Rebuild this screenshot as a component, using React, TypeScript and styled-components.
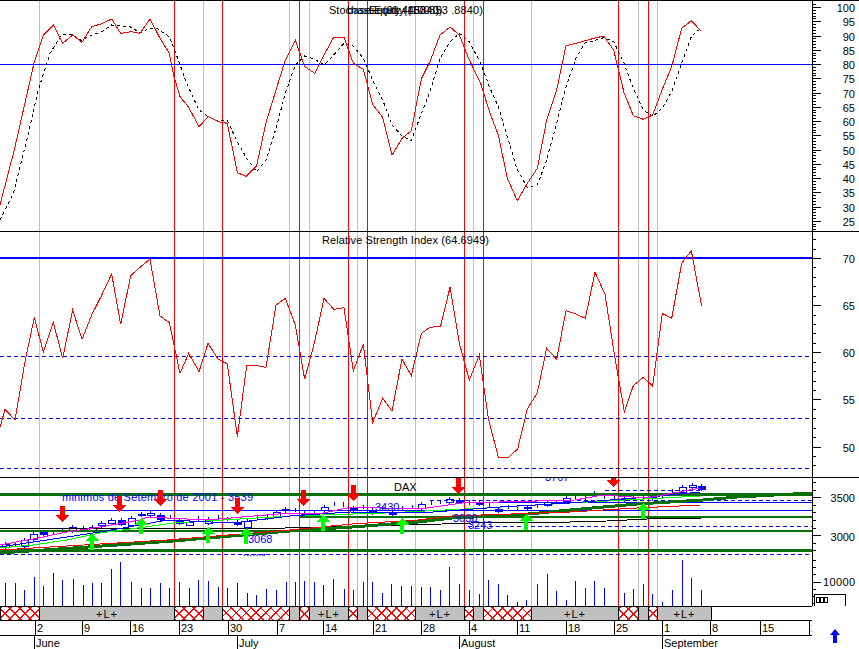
import React from 'react';
import styled, { createGlobalStyle } from 'styled-components';

const GlobalStyle = createGlobalStyle`
  html, body {
    margin: 0;
    padding: 0;
    background: white;
  }
`;

const Page = styled.div`
  width: 859px;
  height: 649px;
  overflow: hidden;
  background: white;
  font-family: "Liberation Sans", Arial, sans-serif;
`;

const PanelRow = styled.div<{ $height: number; $ruled: boolean }>`
  display: flex;
  box-sizing: border-box;
  height: ${props => props.$height}px;
  border-top: ${props => (props.$ruled ? '1px solid black' : 'none')};
`;

const ChartSvg = styled.svg`
  display: block;
  flex: none;
  shape-rendering: crispEdges;
`;

const ChartText = styled.text<{ $color?: string }>`
  font-family: "Liberation Sans", Arial, sans-serif;
  font-size: 11px;
  fill: ${props => props.$color || 'black'};
`;

const Strip = styled.div`
  display: flex;
  box-sizing: border-box;
  width: 812px;
  height: 15px;
  border-top: 1px solid black;
  border-bottom: 1px solid black;
`;

const StripSegment = styled.div<{ $width: number; $hatched: boolean; $last: boolean }>`
  flex: none;
  box-sizing: border-box;
  display: flex;
  align-items: center;
  justify-content: center;
  width: ${props => props.$width + (props.$last ? 1 : 0)}px;
  border-left: 1px solid black;
  border-right: ${props => (props.$last ? '1px solid black' : 'none')};
  font-size: 11px;
  letter-spacing: 1px;
  color: black;
  background-color: ${props => (props.$hatched ? 'white' : '#c0c0c0')};
  background-image: ${props =>
    props.$hatched
      ? `repeating-linear-gradient(45deg, #ff0000 0 1px, transparent 1px 7px),
         repeating-linear-gradient(-45deg, #ff0000 0 1px, transparent 1px 7px)`
      : 'none'};
`;

const DateRow = styled.div`
  display: flex;
  height: 28px;
`;

const ArrowCell = styled.div`
  flex: 1;
  padding: 8px 0 0 18px;
`;

const ArrowSvg = styled.svg`
  display: block;
`;

const BLUE = '#0000ff';
const RED = '#ff0000';
const GREY = '#c0c0c0';
const DARK_GREEN = '#087008';
const BRIGHT_GREEN = '#00ff00';
const PLOT_W = 812;
const AXIS_W = 47;

// points below are read off 3x crops, so they carry the crop's origin
const crop = (ox: number, oy: number, pts: number[][]) =>
  pts.map(([x, y, ...rest]) => [ox + x / 3, oy + y / 3, ...rest]);
const toPoints = (pts: number[][]) => pts.map(p => p.join(',')).join(' ');

const stochK = [
  ...crop(0, 0, [[0,615],[44,445],[103,185],[130,105],[160,75],[188,130],[218,105],[246,127],[275,80],[303,72],[335,57],[362,100],[392,95],[420,100],[450,57],[480,115],[508,160],[522,230],[540,290],[566,322],[597,380],[624,350],[654,365],[682,370],[712,518],[738,529],[770,497],[798,368],[828,270],[856,180],[886,120],[914,200],[944,220],[972,165],[1001,112],[1032,112],[1060,190],[1090,208],[1118,313],[1148,352],[1176,466],[1206,415],[1234,392],[1264,237]]),
  ...crop(430, 0, [[0,185],[30,105],[60,81],[88,105],[118,180],[152,250],[180,340],[205,405],[232,535],[262,602],[292,550],[322,505],[350,360],[380,270],[408,137],[438,130],[466,122],[492,115],[521,108],[551,150],[582,278],[610,347],[640,358],[668,345],[696,270],[725,200],[755,85],[784,62],[812,92]]),
];

const stochD = [
  ...crop(0, 0, [[0,660],[40,580],[60,500],[85,400],[115,270],[150,160],[185,103],[215,103],[245,122],[275,105],[305,95],[335,75],[362,78],[390,80],[420,98],[450,85],[470,85],[508,110],[535,180],[560,250],[597,330],[624,350],[654,362],[682,362],[712,425],[740,475],[770,515],[798,480],[828,385],[856,280],[886,195],[914,168],[944,178],[972,195],[1001,165],[1032,130],[1060,138],[1090,175],[1118,240],[1148,300],[1176,375],[1206,408],[1234,422],[1264,340]]),
  ...crop(430, 0, [[0,275],[30,175],[60,125],[88,100],[118,125],[152,190],[180,265],[205,320],[232,410],[262,510],[292,562],[322,555],[350,480],[380,370],[408,260],[438,175],[466,128],[492,122],[521,113],[551,125],[582,190],[610,265],[640,330],[668,350],[696,325],[725,275],[755,190],[784,110],[805,90]]),
];

const rsi = [
  ...crop(0, 230, [[0,592],[15,538],[45,570],[75,395],[103,262],[130,367],[160,277],[188,385],[218,240],[246,328],[275,255],[303,200],[335,132],[362,283],[392,137],[420,112],[450,87],[480,258],[508,278],[540,430],[566,370],[597,425],[624,340],[654,387],[682,402],[712,620],[740,407],[770,407],[798,412],[828,225],[856,205],[886,285],[914,448],[944,335],[972,205],[1001,238],[1032,233],[1060,422],[1090,343],[1118,578],[1148,505],[1176,543],[1206,387],[1234,437],[1264,310]]),
  ...crop(430, 230, [[0,292],[32,288],[60,172],[88,340],[118,450],[148,375],[175,565],[205,682],[235,682],[263,657],[292,537],[322,488],[350,355],[380,388],[408,242],[438,252],[466,265],[495,127],[525,193],[555,385],[583,545],[610,467],[640,442],[668,468],[697,250],[725,265],[755,100],[784,62],[800,150],[815,228]]),
];

// x, y, body height in crop pixels, filled
const candles = [
  ...crop(0, 465, [[15,238,10,0],[45,238,1,0],[73,225,18,0],[100,207,14,0],[130,200,6,1],[158,202,1,0],[187,197,1,0],[217,187,10,0],[248,190,5,1],[276,185,10,0],[304,175,7,0],[334,165,9,0],[362,166,12,1],[392,160,20,0],[422,147,4,1],[450,145,6,0],[480,150,12,1],[510,155,1,0],[538,165,10,1],[566,170,8,0],[595,160,1,0],[624,163,12,0],[654,157,1,0],[682,162,1,0],[712,172,6,1],[740,167,18,0],[770,155,1,0],[800,157,1,0],[828,140,12,0],[856,133,4,1]]),
  ...crop(285, 465, [[30,135,1,0],[58,143,8,1],[88,143,1,0],[117,125,10,0],[146,117,1,0],[175,118,1,0],[205,128,6,1],[235,125,1,0],[262,135,10,1],[292,128,1,0],[322,140,6,1],[350,128,1,0],[380,125,1,0],[408,118,12,0],[437,112,1,0],[465,110,1,0],[493,102,10,0],[523,106,6,1],[552,112,1,0],[582,113,4,1],[612,118,1,0],[640,133,5,1],[668,125,1,0],[697,128,1,0],[725,125,4,1],[755,122,1,0],[785,110,10,0],[813,110,1,0],[843,98,10,0]]),
  ...crop(570, 465, [[15,96,1,0],[45,97,1,0],[73,85,6,0],[103,95,1,0],[133,100,1,0],[163,100,6,1],[190,100,1,0],[220,97,1,0],[247,97,4,1],[277,95,1,0],[307,78,1,0],[337,65,14,0],[365,60,6,0],[393,62,10,1]]),
];

const volumes = [
  ...crop(0, 465, [[15,353],[45,353],[73,375],[103,335],[130,362],[160,323],[187,345],[220,342],[248,360],[277,353],[304,353],[334,312],[361,291],[392,350],[424,369],[451,369],[481,353],[508,369],[538,351],[566,369],[595,345],[624,348],[655,365],[682,369],[712,353],[740,383],[769,390],[797,372],[829,375],[857,351]]),
  ...crop(285, 465, [[31,351],[58,348],[88,351],[115,360],[145,342],[178,372],[205,375],[235,351],[262,351],[292,384],[319,357],[349,363],[379,363],[409,366],[436,366],[466,375],[493,306],[523,357],[553,375],[583,387],[610,345],[640,357],[667,390],[697,411],[724,405],[757,357],[787,327],[814,378],[844,405]]),
  ...crop(570, 465, [[15,348],[45,369],[73,348],[103,369],[163,384],[190,372],[220,357],[247,387],[277,411],[307,375],[337,285],[364,339],[394,375]]),
];

const blackTrend = [[0,528],[285,528],[330,527],[365,526],[442,524],[500,522],[570,522],[607,521],[647,519],[675,518],[701,518]];
const thickTrend = [[0,553],[117,545],[173,541],[290,531],[352,527],[418,522],[452,518],[518,515],[570,510],[637,504],[703,500],[737,497],[812,493]];
const redTrend = [[0,550],[67,546],[167,540],[290,530],[352,524],[418,520],[452,516],[570,512],[637,508],[700,505]];
const greenTrend = [[0,548],[33,545],[67,540],[100,533],[145,527],[173,523],[290,516],[385,513],[485,508],[570,503],[700,496]];
const magentaTrend = [[0,545],[33,539],[67,532],[100,527],[140,520],[147,517],[207,520],[290,513],[318,514],[352,507],[420,509],[462,503],[575,500],[603,495],[647,498],[700,488]];
const blueTrend = [[0,547],[33,542],[67,537],[100,532],[140,525],[167,520],[233,523],[290,516],[350,512],[420,513],[500,507],[570,503],[650,497],[700,492]];

const greyLines = [39, 203, 289, 309, 357, 415, 473, 531, 638, 657];
const redLines = [174, 222, 299, 348, 367, 464, 483, 618, 648];

const redArrows = [[62, 506], [119, 496], [160, 490], [237, 498], [303, 490], [353, 485], [458, 478], [613, 471]];
const greenArrows = [[92, 534], [141, 518], [208, 527], [246, 528], [323, 515], [402, 518], [526, 514], [643, 503]];

const stripEdges = [0, 39, 174, 203, 222, 289, 299, 309, 348, 357, 367, 415, 464, 473, 483, 531, 618, 638, 648, 657, 711];
const stripKinds = ['x', 'L', 'x', '', 'x', '', 'x', 'L', 'x', '', 'x', 'L', 'x', '', 'x', 'L', 'x', '', 'x', 'L'];

const days = [
  [35, '2'], [82, '9'], [130, '16'], [179, '23'], [228, '30'], [277, '7'], [323, '14'], [373, '21'], [421, '28'],
  [469, '4'], [517, '11'], [566, '18'], [614, '25'], [662, '1'], [710, '8'], [760, '15'], [809, '22'],
] as [number, string][];
const months = [[34, 'June'], [237, 'July'], [459, 'August'], [662, 'September']] as [number, string][];

const range = (from: number, to: number, step: number) => {
  const out: number[] = [];
  for (let v = from; v <= to; v += step) out.push(v);
  return out;
};

const HLine: React.FC<{ y: number; x1?: number; x2?: number; color?: string; width?: number; dashed?: boolean }> = ({
  y, x1 = 0, x2 = PLOT_W, color = BLUE, width = 1, dashed,
}) => (
  <line
    x1={x1}
    x2={x2}
    y1={width % 2 ? y + 0.5 : y}
    y2={width % 2 ? y + 0.5 : y}
    stroke={color}
    strokeWidth={width}
    strokeDasharray={dashed ? '4 3' : undefined}
  />
);

const Guides: React.FC<{ top: number; bottom: number }> = ({ top, bottom }) => (
  <>
    {greyLines.map(x => (
      <line key={x} x1={x + 0.5} x2={x + 0.5} y1={top} y2={bottom} stroke={GREY} />
    ))}
    {redLines.map(x => (
      <line key={x} x1={x + 0.5} x2={x + 0.5} y1={top} y2={bottom} stroke={RED} />
    ))}
  </>
);

const Trace: React.FC<{ pts: number[][]; color: string; width?: number; dashed?: boolean }> = ({ pts, color, width = 1, dashed }) => (
  <polyline
    points={toPoints(pts)}
    fill="none"
    stroke={color}
    strokeWidth={width}
    strokeDasharray={dashed ? '3 3' : undefined}
  />
);

const AxisTicks: React.FC<{ majors: number[]; minors: number[] }> = ({ majors, minors }) => (
  <>
    {minors.map(y => (
      <line key={y} x1={812} x2={816} y1={Math.round(y) + 0.5} y2={Math.round(y) + 0.5} stroke="black" />
    ))}
    {majors.map(y => (
      <line key={y} x1={812} x2={821} y1={Math.round(y) + 0.5} y2={Math.round(y) + 0.5} stroke="black" />
    ))}
  </>
);

const AxisLabel: React.FC<{ y: number; children: React.ReactNode }> = ({ y, children }) => (
  <ChartText x={855} y={y} textAnchor="end">
    {children}
  </ChartText>
);

const Panel: React.FC<{
  top: number;
  height: number;
  ruled?: boolean;
  plot: React.ReactNode;
  axis: React.ReactNode;
}> = ({ top, height, ruled = false, plot, axis }) => {
  const inner = height - (ruled ? 1 : 0);
  const y0 = top + (ruled ? 1 : 0);
  return (
    <PanelRow $height={height} $ruled={ruled}>
      <ChartSvg width={PLOT_W} height={inner} viewBox={`0 ${y0} ${PLOT_W} ${inner}`}>
        {plot}
      </ChartSvg>
      <ChartSvg width={AXIS_W} height={inner} viewBox={`${PLOT_W} ${y0} ${AXIS_W} ${inner}`}>
        <line x1={812.5} x2={812.5} y1={y0} y2={y0 + inner} stroke="black" />
        {axis}
      </ChartSvg>
    </PanelRow>
  );
};

const DownArrow: React.FC<{ x: number; y: number }> = ({ x, y }) => (
  <polygon
    points={`${x - 2},${y} ${x + 3},${y} ${x + 3},${y + 9} ${x + 7},${y + 9} ${x},${y + 16} ${x - 6},${y + 9} ${x - 2},${y + 9}`}
    fill={RED}
  />
);

const UpArrow: React.FC<{ x: number; y: number }> = ({ x, y }) => (
  <polygon
    points={`${x},${y} ${x + 7},${y + 7} ${x + 2},${y + 7} ${x + 2},${y + 16} ${x - 2},${y + 16} ${x - 2},${y + 7} ${x - 7},${y + 7}`}
    fill={BRIGHT_GREEN}
  />
);

const stochY = (u: number) => 64 + (80 - u) * 2.85;
const rsiY = (u: number) => 258 + (70 - u) * 9.43;

const StochasticPanel = () => (
  <Panel
    top={0}
    height={231}
    ruled
    plot={
      <>
        <Guides top={0} bottom={231} />
        <HLine y={64} />
        <Trace pts={stochD} color="black" dashed />
        <Trace pts={stochK} color={RED} />
        <ChartText x={329} y={14}>Stochastic (91.4453.8)</ChartText>
        <ChartText x={347} y={14}>base Equity (100.0)</ChartText>
        <ChartText x={369} y={14} textLength={114}>Equity (1604.53 .8840)</ChartText>
      </>
    }
    axis={
      <>
        <AxisTicks
          majors={range(25, 100, 5).map(stochY)}
          minors={range(21, 101, 1).map(stochY)}
        />
        {range(25, 100, 5).map(u => (
          <AxisLabel key={u} y={Math.round(stochY(u)) + 5}>{u}</AxisLabel>
        ))}
      </>
    }
  />
);

const RsiPanel = () => (
  <Panel
    top={231}
    height={246}
    ruled
    plot={
      <>
        <Guides top={231} bottom={477} />
        <HLine y={258} width={2} />
        <HLine y={356} dashed />
        <HLine y={418} dashed />
        <HLine y={468} dashed />
        <Trace pts={rsi} color={RED} />
        <ChartText x={322} y={244} textLength={167}>Relative Strength Index (64.6949)</ChartText>
      </>
    }
    axis={
      <>
        <AxisTicks
          majors={range(50, 70, 5).map(rsiY)}
          minors={range(48, 72, 1).map(rsiY)}
        />
        {range(50, 70, 5).map(u => (
          <AxisLabel key={u} y={Math.round(rsiY(u)) + 5}>{u}</AxisLabel>
        ))}
      </>
    }
  />
);

const PricePanel = () => (
  <Panel
    top={477}
    height={79}
    ruled
    plot={
      <>
        <Guides top={477} bottom={556} />
        {candles.map(([x, y, h, filled], i) => (
          <g key={i}>
            <line x1={Math.round(x) + 0.5} x2={Math.round(x) + 0.5} y1={y - 2} y2={y + h / 3 + 2} stroke={BLUE} />
            <rect
              x={Math.round(x) - 3}
              y={Math.round(y)}
              width={7}
              height={Math.round(h / 3)}
              fill={filled ? BLUE : 'white'}
              stroke={BLUE}
            />
          </g>
        ))}
        <HLine y={494} color={DARK_GREEN} width={3} />
        <HLine y={517} x1={300} color={DARK_GREEN} width={2} />
        <HLine y={531} color={DARK_GREEN} width={2} />
        <HLine y={550} color={DARK_GREEN} width={3} />
        <HLine y={510} />
        <HLine y={502} x1={470} />
        <HLine y={500} x1={430} dashed />
        <HLine y={490} x1={605} x2={700} dashed />
        <HLine y={526} x1={468} dashed />
        <HLine y={554} dashed />
        <Trace pts={blackTrend} color="black" />
        <Trace pts={thickTrend} color={DARK_GREEN} width={3} />
        <Trace pts={redTrend} color={RED} />
        <Trace pts={greenTrend} color={BRIGHT_GREEN} />
        <Trace pts={blueTrend} color={BLUE} />
        <Trace pts={magentaTrend} color="#ff00ff" />
        <ChartText x={62} y={501} $color={BLUE} textLength={191}>minimos de Setembro de 2001 - 3539</ChartText>
        <ChartText x={394} y={491}>DAX</ChartText>
        <ChartText x={248} y={543} $color={BLUE}>3068</ChartText>
        <ChartText x={243} y={562} $color={BLUE}>2661</ChartText>
        <ChartText x={375} y={511} $color={BLUE}>3430</ChartText>
        <ChartText x={453} y={522} $color={BLUE}>3030</ChartText>
        <ChartText x={468} y={529} $color={BLUE}>3243</ChartText>
        <ChartText x={545} y={481} $color={BLUE}>3707</ChartText>
        {redArrows.map(([x, y]) => <DownArrow key={x} x={x} y={y} />)}
        {greenArrows.map(([x, y]) => <UpArrow key={x} x={x} y={y} />)}
      </>
    }
    axis={
      <>
        <AxisTicks majors={[497, 535]} minors={range(0, 9, 1).map(i => 482 + i * 7.6)} />
        <AxisLabel y={502}>3500</AxisLabel>
        <AxisLabel y={541}>3000</AxisLabel>
      </>
    }
  />
);

const VolumePanel = () => (
  <Panel
    top={556}
    height={50}
    plot={
      <>
        <Guides top={556} bottom={606} />
        {volumes.map(([x, y]) => (
          <line key={x} x1={Math.round(x) + 0.5} x2={Math.round(x) + 0.5} y1={Math.round(y)} y2={606} stroke={BLUE} />
        ))}
      </>
    }
    axis={
      <>
        <AxisTicks majors={[582]} minors={[560, 567, 574, 589, 596, 603]} />
        <ChartText x={855} y={586} textAnchor="end" textLength={32}>10000</ChartText>
        <rect x={814.5} y={594.5} width={31} height={12} fill="white" stroke="black" />
        {[816, 820, 824].map(x => (
          <rect key={x} x={x + 0.5} y={597.5} width={3} height={5} fill="white" stroke="black" />
        ))}
      </>
    }
  />
);

const SessionStrip = () => (
  <Strip>
    {stripKinds.map((kind, i) => (
      <StripSegment
        key={i}
        $width={stripEdges[i + 1] - stripEdges[i]}
        $hatched={kind === 'x'}
        $last={i === stripKinds.length - 1}
      >
        {kind === 'L' ? '+L+' : null}
      </StripSegment>
    ))}
  </Strip>
);

const DateAxis = () => (
  <DateRow>
    <ChartSvg width={PLOT_W} height={28} viewBox={`0 621 ${PLOT_W} 28`}>
      <line x1={0} x2={PLOT_W} y1={635.5} y2={635.5} stroke="black" />
      {days.map(([x, label]) => (
        <g key={x}>
          <line x1={x + 0.5} x2={x + 0.5} y1={621} y2={635} stroke="black" />
          <ChartText x={x + 2} y={632}>{label}</ChartText>
        </g>
      ))}
      {months.map(([x, label]) => (
        <g key={x}>
          <line x1={x + 0.5} x2={x + 0.5} y1={635} y2={649} stroke="black" />
          <ChartText x={x + 2} y={647}>{label}</ChartText>
        </g>
      ))}
    </ChartSvg>
    <ArrowCell>
      <ArrowSvg width={10} height={14} viewBox="0 0 10 14">
        <polygon points="5,0 10,6 7,6 7,14 3,14 3,6 0,6" fill={BLUE} />
      </ArrowSvg>
    </ArrowCell>
  </DateRow>
);

const App: React.FC = () => (
  <Page>
    <GlobalStyle />
    <StochasticPanel />
    <RsiPanel />
    <PricePanel />
    <VolumePanel />
    <SessionStrip />
    <DateAxis />
  </Page>
);

export default App;
